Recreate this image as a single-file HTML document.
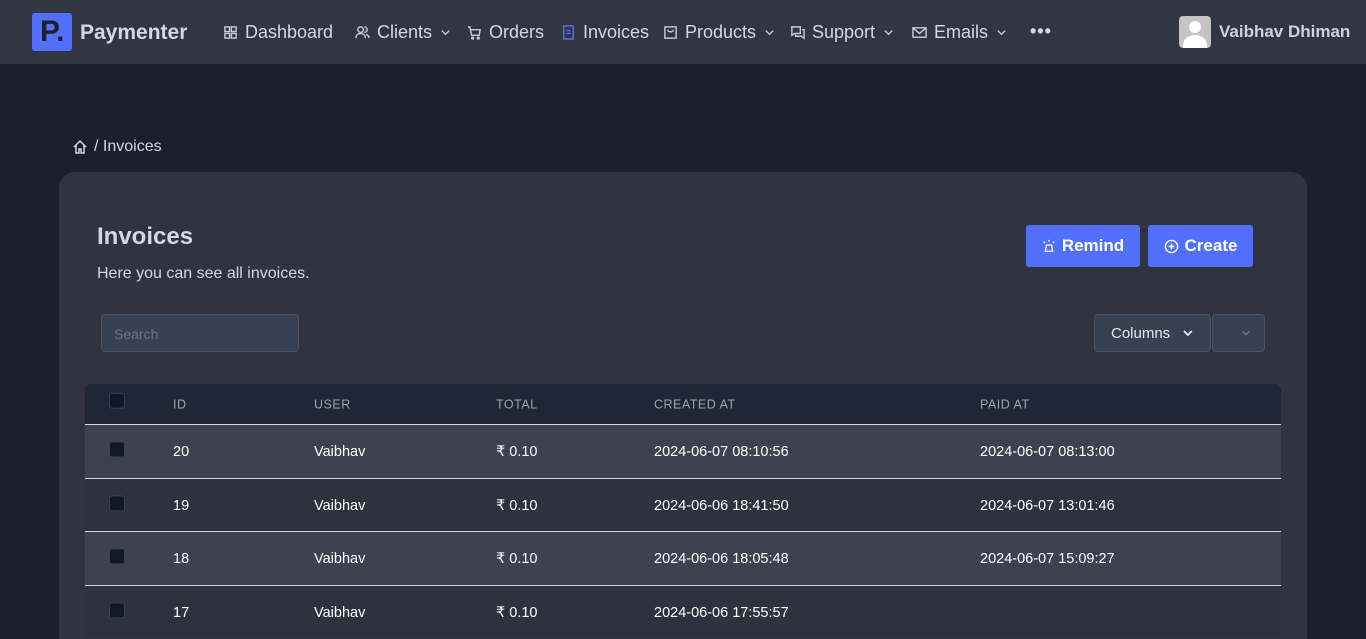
<!DOCTYPE html>
<html><head><style>
*{box-sizing:border-box;margin:0;padding:0}
html,body{width:1366px;height:639px;overflow:hidden}
body{background:#1e1f2b;font-family:"Liberation Sans",sans-serif;color:#e5e7eb;position:relative}
.nav{position:absolute;left:0;top:0;width:1366px;height:64px;background:#323643}
.logo{position:absolute;left:32px;top:13px;width:40px;height:38px;background:#5270fd;border-radius:3px;color:#1e2030;font-weight:bold;font-size:30px;line-height:38px;padding-left:8px}
.brand{position:absolute;left:80px;top:21px;font-size:21px;font-weight:bold;color:#d4d8e2}
.ni{position:absolute;top:22px;font-size:18px;color:#d4d8e2;display:flex;align-items:center;gap:7px}
.ni svg{width:15px;height:15px;stroke:#c8ccd6;fill:none;stroke-width:1.5}
.ni svg.ch{width:11px;height:11px;margin-left:1px}
.user{position:absolute;left:1179px;top:16px;display:flex;align-items:center;gap:8px;font-weight:bold;font-size:17px;color:#cdd3e0}
.av{width:32px;height:32px;border-radius:4px;background:#c4c4c4;position:relative;overflow:hidden}
.av:before{content:"";position:absolute;left:10px;top:5px;width:12px;height:12px;border-radius:50%;background:#fff}
.av:after{content:"";position:absolute;left:4px;top:19px;width:24px;height:20px;border-radius:50% 50% 0 0;background:#fff}
.crumb{position:absolute;left:72px;top:138px;font-size:16px;color:#d4d8e2;display:flex;gap:6px;align-items:center}
.card{position:absolute;left:59px;top:172px;width:1248px;height:467px;background:#313340;border-radius:16px 16px 0 0}
h1{position:absolute;left:97px;top:223px;font-size:24px;font-weight:bold;color:#d4d8e2}
.sub{position:absolute;left:97px;top:265px;font-size:16px;color:#d4d8e2}
.btn{position:absolute;top:225px;height:42px;background:#5270fd;border-radius:3px;color:#fff;font-weight:bold;font-size:17px;display:flex;align-items:center;justify-content:center;gap:6px}
.search{position:absolute;left:101px;top:314px;width:198px;height:38px;background:#384152;border:1px solid #4b5261;border-radius:4px;font-size:14px;color:#6b7383;padding:11px 12px}
.cols{position:absolute;left:1094px;top:314px;width:117px;height:38px;background:#384152;border:1px solid #4b5261;border-radius:4px;font-size:15px;color:#e5e7eb;padding:10px 16px;display:flex;align-items:center;gap:12px}
.cols2{position:absolute;left:1212px;top:314px;width:53px;height:38px;background:#384152;border:1px solid #4b5261;border-radius:4px}
.tbl{position:absolute;left:85px;top:384px;width:1196px}
.row{position:relative;height:53.5px;border-top:1px solid #d4d6de;font-size:14.5px;color:#fff}
.hd{height:40px;background:#1f2636;border-radius:6px 6px 0 0;border:none;font-size:12.5px;color:#9ca3af;letter-spacing:.5px}
.row span{position:absolute;top:50%;transform:translateY(-45%)}
.cb{position:absolute;left:24px;top:50%;transform:translateY(-60%);width:16px;height:16px;border-radius:3px;background:#111827;border:1px solid #374151}
.a{background:#3f4150}.b{background:#2f313d}
</style></head><body>
<div class="nav">
<div class="logo">P.</div><div class="brand">Paymenter</div>
<div class="ni" style="left:223px"><svg viewBox="0 0 16 16"><rect x="2" y="2" width="5" height="5"/><rect x="9" y="2" width="5" height="5"/><rect x="2" y="9" width="5" height="5"/><rect x="9" y="9" width="5" height="5"/></svg>Dashboard</div>
<div class="ni" style="left:355px"><svg viewBox="0 0 16 16"><circle cx="6" cy="5" r="3"/><path d="M1 14c0-3 2-5 5-5s5 2 5 5M10 2a3 3 0 010 6M12 10c2 1 3 2 3 4"/></svg>Clients<svg class="ch" viewBox="0 0 12 12"><path d="M2 4l4 4 4-4"/></svg></div>
<div class="ni" style="left:467px"><svg viewBox="0 0 16 16"><path d="M1 2h2l2 9h8l1-6H4"/><circle cx="6" cy="14" r="1"/><circle cx="12" cy="14" r="1"/></svg>Orders</div>
<div class="ni" style="left:561px"><svg viewBox="0 0 16 16" style="stroke:#5270fd"><rect x="3" y="1" width="10" height="14"/><path d="M6 6h4M6 9h4"/></svg>Invoices</div>
<div class="ni" style="left:663px"><svg viewBox="0 0 16 16"><rect x="2" y="2" width="12" height="12"/><path d="M5 5c0 3 6 3 6 0"/></svg>Products<svg class="ch" viewBox="0 0 12 12"><path d="M2 4l4 4 4-4"/></svg></div>
<div class="ni" style="left:790px"><svg viewBox="0 0 16 16"><path d="M1 2h10v7H5l-3 2V2zM13 5h2v9l-3-2H6v-2"/></svg>Support<svg class="ch" viewBox="0 0 12 12"><path d="M2 4l4 4 4-4"/></svg></div>
<div class="ni" style="left:912px"><svg viewBox="0 0 16 16"><rect x="1" y="3" width="14" height="10"/><path d="M1 3l7 6 7-6"/></svg>Emails<svg class="ch" viewBox="0 0 12 12"><path d="M2 4l4 4 4-4"/></svg></div>
<div class="ni" style="left:1030px;font-weight:bold;letter-spacing:1px;top:21px">•••</div>
<div class="user"><div class="av"></div>Vaibhav Dhiman</div>
</div>
<div class="crumb"><svg width="16" height="16" viewBox="0 0 16 16" fill="none" stroke="#d4d8e2" stroke-width="1.5"><path d="M2 8l6-6 6 6M4 6v8h3v-4h2v4h3V6"/></svg>/ Invoices</div>
<div class="card"></div>
<h1>Invoices</h1>
<div class="sub">Here you can see all invoices.</div>
<div class="btn" style="left:1026px;width:114px"><svg width="14" height="14" viewBox="0 0 16 16" fill="none" stroke="#fff" stroke-width="1.5"><path d="M3 14h10M4 14l1-7h6l1 7M8 1v2M2 3l1.5 1.5M14 3l-1.5 1.5"/></svg>Remind</div>
<div class="btn" style="left:1148px;width:105px"><svg width="15" height="15" viewBox="0 0 16 16" fill="none" stroke="#fff" stroke-width="1.5"><circle cx="8" cy="8" r="6.5"/><path d="M8 5v6M5 8h6"/></svg>Create</div>
<div class="search">Search</div>
<div class="cols">Columns<svg width="12" height="12" viewBox="0 0 12 12" fill="none" stroke="#e5e7eb" stroke-width="1.8"><path d="M2 4l4 4 4-4"/></svg></div>
<div class="cols2"><svg style="position:absolute;left:28px;top:13px" width="10" height="10" viewBox="0 0 12 12" fill="none" stroke="#6b7383" stroke-width="1.8"><path d="M2 4l4 4 4-4"/></svg></div>
<div class="tbl">
<div class="row hd"><div class="cb" style="transform:translateY(-70%)"></div><span style="left:88px">ID</span><span style="left:229px">USER</span><span style="left:411px">TOTAL</span><span style="left:569px">CREATED AT</span><span style="left:895px">PAID AT</span></div>
<div class="row a"><div class="cb"></div><span style="left:88px">20</span><span style="left:229px">Vaibhav</span><span style="left:411px">₹ 0.10</span><span style="left:569px">2024-06-07 08:10:56</span><span style="left:895px">2024-06-07 08:13:00</span></div>
<div class="row b"><div class="cb"></div><span style="left:88px">19</span><span style="left:229px">Vaibhav</span><span style="left:411px">₹ 0.10</span><span style="left:569px">2024-06-06 18:41:50</span><span style="left:895px">2024-06-07 13:01:46</span></div>
<div class="row a"><div class="cb"></div><span style="left:88px">18</span><span style="left:229px">Vaibhav</span><span style="left:411px">₹ 0.10</span><span style="left:569px">2024-06-06 18:05:48</span><span style="left:895px">2024-06-07 15:09:27</span></div>
<div class="row b"><div class="cb"></div><span style="left:88px">17</span><span style="left:229px">Vaibhav</span><span style="left:411px">₹ 0.10</span><span style="left:569px">2024-06-06 17:55:57</span></div>
</div>
</body></html>
